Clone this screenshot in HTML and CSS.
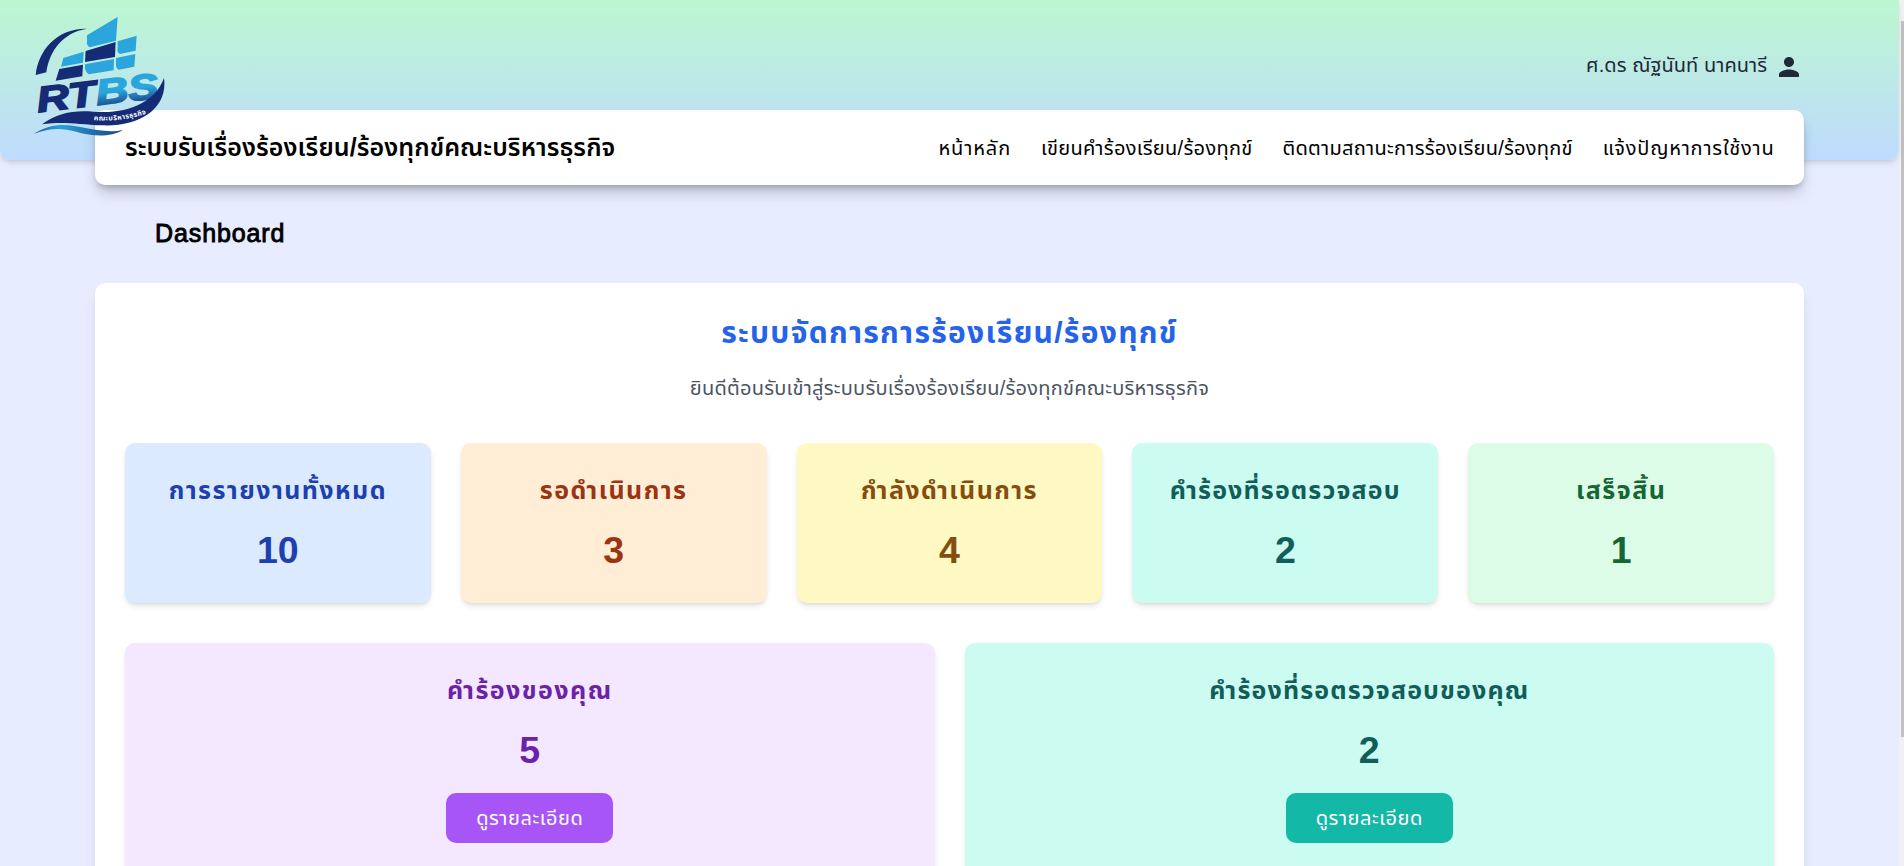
FILE: index.html
```html
<!DOCTYPE html>
<html lang="th">
<head>
<meta charset="utf-8">
<title>Dashboard</title>
<link rel="stylesheet" href="styles.css">
</head>
<body>
<div class="screen">
  <div class="page">
    <header class="banner">
      <div class="user">
        <span class="user-name">ศ.ดร ณัฐนันท์ นาคนารี</span>
        <svg class="user-icon" viewBox="0 0 24 24"><path d="M12 12c2.21 0 4-1.79 4-4s-1.79-4-4-4-4 1.79-4 4 1.79 4 4 4zm0 2c-2.67 0-8 1.34-8 4v2h16v-2c0-2.66-5.33-4-8-4z"/></svg>
      </div>
      <svg class="logo" viewBox="100 45 400 365">
        <defs>
          <linearGradient id="letters" x1="0" y1="0" x2="0" y2="1"><stop offset=".5" stop-color="#2ba6dc"/><stop offset=".85" stop-color="#1b4c93"/></linearGradient>
          <linearGradient id="wave" x1="0" y1="0" x2="1" y2="0"><stop offset="0" stop-color="#1d5ea8"/><stop offset=".3" stop-color="#2a9fd6"/><stop offset="1" stop-color="#1a3f8a"/></linearGradient>
        </defs>
        <path fill="#162b75" d="M108 225C116 150 172 84 262 86C190 98 150 150 140 217Z"/>
        <path fill="#2ba6dc" d="M262 106L354 51L349 122L271 142Q260 138 262 124Z"/>
        <path fill="#162b75" d="M258 153L348 126L346 171L256 186Z"/>
        <path fill="#2ba6dc" d="M354 124L411 107L408 152L361 162Q351 158 354 145Z"/>
        <path fill="#2ba6dc" d="M191 174L252 155L250 188L184 200Z"/>
        <path fill="#162b75" d="M179 207L250 194L248 229L168 242Z"/>
        <path fill="#2ba6dc" d="M256 193L343 177L342 211L268 223Q254 216 256 193Z"/>
        <path fill="#2ba6dc" d="M349 174L407 162L404 200L357 209Q347 204 349 190Z"/>
        <g class="logo-letters" transform="translate(116 337) rotate(-7)">
          <text x="0" y="0" textLength="177" lengthAdjust="spacingAndGlyphs" fill="#162b75" stroke="#162b75">RT</text>
          <text x="178" y="0" textLength="188" lengthAdjust="spacingAndGlyphs" fill="url(#letters)" stroke="url(#letters)">BS</text>
        </g>
        <path fill="#162b75" d="M127 373C174 337 226 330 282 335C380 343 466 310 493 234C506 324 421 381 307 376C237 373 188 363 127 373Z"/>
        <path fill="url(#wave)" d="M102 402C154 367 205 373 246 382C293 392 336 398 370 390C329 414 276 408 232 396C187 384 151 383 102 402Z"/>
        <path id="motto" fill="none" d="M282 361Q370 366 443 340"/>
        <text class="logo-motto"><textPath href="#motto" textLength="160">คณะบริหารธุรกิจ</textPath></text>
      </svg>
    </header>
    <nav class="navbar">
      <div class="brand">ระบบรับเรื่องร้องเรียน/ร้องทุกข์คณะบริหารธุรกิจ</div>
      <div class="links">
        <a class="link-home">หน้าหลัก</a>
        <a class="link-write">เขียนคำร้องเรียน/ร้องทุกข์</a>
        <a class="link-track">ติดตามสถานะการร้องเรียน/ร้องทุกข์</a>
        <a class="link-report">แจ้งปัญหาการใช้งาน</a>
      </div>
    </nav>
    <h1 class="page-title">Dashboard</h1>
    <main class="panel">
      <h2 class="panel-title">ระบบจัดการการร้องเรียน/ร้องทุกข์</h2>
      <p class="panel-sub">ยินดีต้อนรับเข้าสู่ระบบรับเรื่องร้องเรียน/ร้องทุกข์คณะบริหารธุรกิจ</p>
      <div class="stats">
        <section class="card blue"><h3>การรายงานทั้งหมด</h3><p>10</p></section>
        <section class="card orange"><h3>รอดำเนินการ</h3><p>3</p></section>
        <section class="card yellow"><h3>กำลังดำเนินการ</h3><p>4</p></section>
        <section class="card teal"><h3>คำร้องที่รอตรวจสอบ</h3><p>2</p></section>
        <section class="card green"><h3>เสร็จสิ้น</h3><p>1</p></section>
      </div>
      <div class="own">
        <section class="card purple"><h3>คำร้องของคุณ</h3><p>5</p><button>ดูรายละเอียด</button></section>
        <section class="card teal"><h3>คำร้องที่รอตรวจสอบของคุณ</h3><p>2</p><button>ดูรายละเอียด</button></section>
      </div>
    </main>
  </div>
  <div class="scrollbar"><div class="thumb"></div></div>
</div>
</body>
</html>
```
FILE: styles.css
```css
* { box-sizing: border-box; }
html { font-size: 20px; }
body { margin: 0; overflow: hidden; font-family: "Liberation Sans", "Noto Sans Thai", "Noto Sans", sans-serif; line-height: 1.5; color: #000; }
h1, h2, h3, p { margin: 0; }
.screen { display: flex; height: 866px; overflow: hidden; background: #e7ecff; }
.page { flex: 1; min-width: 0; }
.scrollbar { width: 5px; padding: 21px 0 0 2px; background: #f1f1f1; }
.thumb { height: 716px; background: #c1c1c1; }

.banner { position: relative; height: 160px; padding: 50px 5% 0; border-radius: 0 0 10px 10px; background: linear-gradient(#bbf7d0, #bfdbfe); box-shadow: 0 4px 6px -1px rgba(0,0,0,.1), 0 2px 4px -2px rgba(0,0,0,.1); }
.user { display: flex; justify-content: flex-end; align-items: center; gap: 7px; height: 34px; color: #1f2937; }
.user-name { padding-bottom: 4px; line-height: 30px; letter-spacing: .06px; white-space: nowrap; }
.user-icon { width: 30px; height: 30px; fill: currentColor; }
.logo { position: absolute; z-index: 2; left: 33.3px; top: 15px; width: 133.3px; height: 121.7px; }
.logo-letters { font: italic bold 107px "Liberation Sans", sans-serif; stroke-width: 5px; }
.logo-motto { font: bold 21px "Liberation Sans", "Noto Sans Thai", sans-serif; fill: #fff; }

.navbar { position: relative; display: flex; justify-content: space-between; align-items: center; height: 75px; margin: -50px 5% 0; padding: 0 30px; border-radius: 10px; background: #fff; white-space: nowrap; box-shadow: 0 10px 15px -3px rgba(0,0,0,.2), 0 4px 6px -2px rgba(0,0,0,.2); }
.brand { font-size: 25px; font-weight: 600; letter-spacing: .1px; }
.links { display: flex; gap: 30px; }
.link-home { letter-spacing: .9px; }
.link-write { letter-spacing: .32px; }
.link-track { letter-spacing: .27px; }
.link-report { letter-spacing: .8px; margin-right: -.5px; }

.page-title { height: 98px; padding: 28px 0 0 155px; font-size: 25px; font-weight: 400; letter-spacing: .9px; line-height: 40px; -webkit-text-stroke: .9px #000; }

.panel { height: 700px; margin: 0 5%; padding: 30px; border-radius: 10px; background: #fff; text-align: center; box-shadow: 0 10px 15px -3px rgba(0,0,0,.1), 0 4px 6px -4px rgba(0,0,0,.1); }
.panel-title { font-size: 30px; font-weight: 700; line-height: 40px; letter-spacing: 1.27px; color: #2563eb; }
.panel-sub { margin: 20px 0 40px; line-height: 30px; letter-spacing: .25px; color: #4b5563; }
.stats { display: grid; grid-template-columns: repeat(5, 1fr); gap: 30px; }
.own { display: grid; grid-template-columns: repeat(2, 1fr); gap: 30px; margin-top: 40px; }
.card { padding: 30px 20px; border-radius: 10px; white-space: nowrap; box-shadow: 0 4px 6px -1px rgba(0,0,0,.1), 0 2px 4px -2px rgba(0,0,0,.1); }
.stats .card { height: 160px; }
.own .card { height: 300px; }
.card h3 { font-size: 25px; font-weight: 700; line-height: 35px; letter-spacing: 1.45px; }
.card.teal h3 { letter-spacing: 1.15px; }
.card p { margin-top: 20px; font-size: 37.5px; font-weight: 700; line-height: 45px; }
.card button { width: 167px; height: 50px; margin-top: 20px; padding: 0; border: 0; border-radius: 10px; color: #fff; font: 20px/30px "Liberation Sans", "Noto Sans Thai", "Noto Sans", sans-serif; letter-spacing: .55px; }
.blue { background: #dbeafe; color: #1e40af; }
.orange { background: #ffedd5; color: #9a3412; }
.yellow { background: #fef9c3; color: #854d0e; }
.teal { background: #ccfbf1; color: #115e59; }
.green { background: #dcfce7; color: #166534; }
.purple { background: #f3e8ff; color: #6b21a8; }
.purple button { background: #a855f7; }
.teal button { background: #14b8a6; }
```
